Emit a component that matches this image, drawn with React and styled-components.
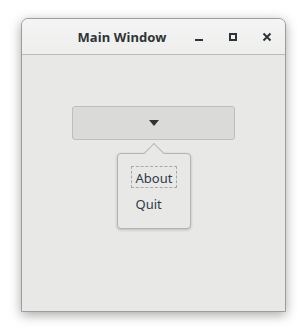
import React from 'react';
import styled, { createGlobalStyle } from 'styled-components';

const Global = createGlobalStyle`
  html, body { margin: 0; padding: 0; background: #ffffff; }
  body { font-family: "Noto Sans", "Open Sans", sans-serif; }
`

const Page = styled.div`
  width: 307px;
  height: 334px;
  padding: 18px 21px 0 21px;
  box-sizing: border-box;
`

const Window = styled.div`
  width: 265px;
  height: 294px;
  box-sizing: border-box;
  border: 1px solid #9d9d9b;
  border-radius: 7px 7px 0 0;
  background: #e8e8e7;
  box-shadow: 0 3px 12px rgba(0, 0, 0, 0.35);
  display: flex;
  flex-direction: column;
  overflow: hidden;
`

const TitleBar = styled.div`
  height: 36px;
  flex: none;
  display: flex;
  align-items: center;
  background: linear-gradient(#f4f4f4, #eeeeed);
  border-bottom: 1px solid #bcbcba;
  box-sizing: border-box;
  padding: 0 10px 0 0;
`

const Title = styled.div`
  flex: 1;
  text-align: center;
  padding-left: 31px;
  font-weight: 700;
  font-size: 13px;
  letter-spacing: 0.1px;
  color: #2e3436;
`

const Controls = styled.div`
  display: flex;
  align-items: center;
  gap: 18px;
`

const Ctrl = styled.div`
  width: 16px;
  height: 16px;
  display: flex;
  align-items: center;
  justify-content: center;
  color: #2e3436;
`

const Body = styled.div`
  flex: 1;
  padding: 51px 50px 0 50px;
  position: relative;
`

const DropButton = styled.div`
  height: 34px;
  box-sizing: border-box;
  border: 1px solid #bebebc;
  border-radius: 3px;
  background: #dadad9;
  display: flex;
  align-items: center;
  justify-content: center;
  position: relative;
`

const Popover = styled.div`
  position: absolute;
  top: 46px;
  left: 50%;
  transform: translateX(-50%);
  width: 74px;
  box-sizing: border-box;
  border: 1px solid #b3b3b1;
  border-radius: 4px;
  background: #e8e8e7;
  box-shadow: 0 1px 3px rgba(0, 0, 0, 0.2);
  padding: 12px 12px 14px 13px;
  display: flex;
  flex-direction: column;
  gap: 4px;
  &::before {
    content: "";
    position: absolute;
    left: 50%;
    top: -8px;
    width: 14px;
    height: 14px;
    transform: translateX(-50%) rotate(45deg);
    background: #e8e8e7;
    border-top: 1px solid #b3b3b1;
    border-left: 1px solid #b3b3b1;
  }
`

const Item = styled.div`
  font-size: 13px;
  color: #2e3a48;
  height: 22px;
  line-height: 22px;
  padding: 0 4px;
  width: fit-content;
  box-sizing: border-box;
  border: 1px dashed ${p => (p.focused ? '#a9a9a7' : 'transparent')};
  position: relative;
  z-index: 1;
`

export default function App() {
  return (
    <>
      <Global />
      <Page>
        <Window>
          <TitleBar>
            <Title>Main Window</Title>
            <Controls>
              <Ctrl>
                <svg width="16" height="16" viewBox="0 0 16 16">
                  <rect x="4" y="10" width="8" height="2" fill="currentColor" />
                </svg>
              </Ctrl>
              <Ctrl>
                <svg width="16" height="16" viewBox="0 0 16 16">
                  <rect x="5" y="5" width="6" height="6" fill="none" stroke="currentColor" strokeWidth="2" />
                </svg>
              </Ctrl>
              <Ctrl>
                <svg width="16" height="16" viewBox="0 0 16 16">
                  <path d="M4.5 4.5 L11.5 11.5 M11.5 4.5 L4.5 11.5" stroke="currentColor" strokeWidth="2" />
                </svg>
              </Ctrl>
            </Controls>
          </TitleBar>
          <Body>
            <DropButton>
              <svg width="10" height="6" viewBox="0 0 10 6">
                <path d="M0 0 H10 L5 6 Z" fill="#2e3436" />
              </svg>
              <Popover>
                <Item focused>About</Item>
                <Item>Quit</Item>
              </Popover>
            </DropButton>
          </Body>
        </Window>
      </Page>
    </>
  );
}
